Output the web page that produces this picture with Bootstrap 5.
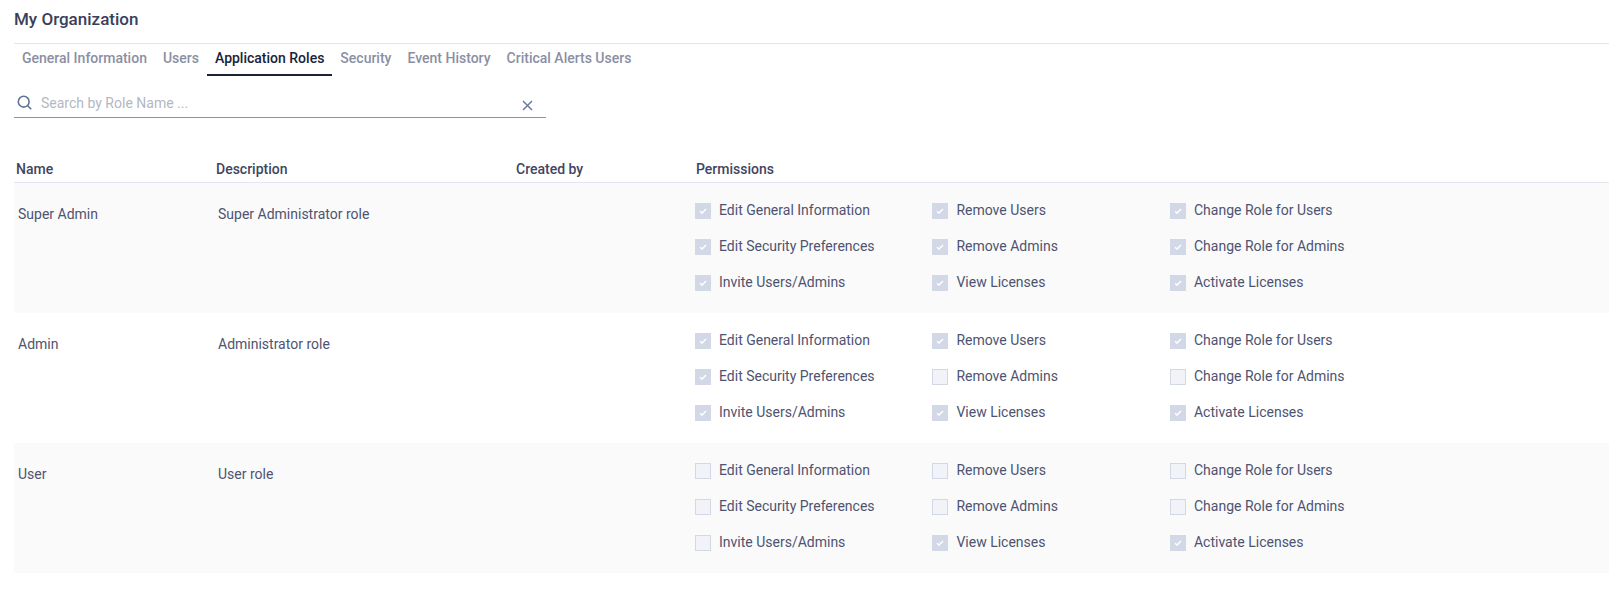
<!DOCTYPE html>
<html lang="en"><head><meta charset="utf-8"><title>My Organization</title>
<link href="https://cdn.jsdelivr.net/npm/bootstrap@5.3.0/dist/css/bootstrap.min.css" rel="stylesheet">
<style>
body{font-family:Roboto,"Liberation Sans",sans-serif;font-size:14px;color:#4e5370;background:#fff;overflow:hidden}
.page-wrap{padding:0 11px 0 14px}
.org-title{font-size:17px;font-weight:500;color:#3a405c;height:44px;line-height:39px;border-bottom:1px solid #e4e5ea;margin:0}
.tab-row{height:32px}
.tab-item{padding:0 8px;height:32px;line-height:29px;color:#8b8fa3;font-weight:500;text-decoration:none;white-space:nowrap}
.tab-item.is-on{color:#1b2238;border-bottom:2px solid #1b2238}
.search-box{width:532px;height:35px;border-bottom:1px solid #929292;margin-top:7px;padding:7px 5px 0 3px}
.search-box input{border:0;outline:0;background:transparent;font:inherit;color:#4e5370;padding:0;margin-left:1px}
.search-box input::placeholder{color:#b4b7c4}
.find-glass{margin-top:-3px}
.clear-x{margin-top:3px}
.role-head{margin-top:41px;height:24px;border-bottom:1px solid #e4e5ee;font-weight:500;color:#3f4562;line-height:20px}
.role-row{height:130px;padding-top:20px}
.role-row.shaded{background:#fafafb}
.c-name{width:195px;flex:none;padding-left:4px}
.c-desc{width:300px;flex:none;padding-left:9px}
.c-by{width:186px;flex:none}
.role-head .c-name{padding-left:2px}
.role-head .c-desc{padding-left:7px}
.role-head .c-by{width:187px;padding-left:7px}
.role-cell-text{padding-top:1px;line-height:20px}
.perm-grid{display:grid;grid-template-columns:237.4px 237.6px 1fr;grid-auto-rows:36px}
.perm-item{display:flex;gap:8px;height:36px;line-height:16px}
.tick{width:16px;height:16px;flex:none;background:#f2f3f8;border:1px solid #d3d8e6;display:flex;align-items:center;justify-content:center}
.tick.on{background:#d3d8e6}
.tick svg{display:block}
.perm-text{margin-top:-1px}
</style></head>
<body>
<div class="page-wrap">
<h1 class="org-title">My Organization</h1>
<nav class="d-flex tab-row"><a class="tab-item" href="#">General Information</a><a class="tab-item" href="#">Users</a><a class="tab-item is-on" href="#">Application Roles</a><a class="tab-item" href="#">Security</a><a class="tab-item" href="#">Event History</a><a class="tab-item" href="#">Critical Alerts Users</a></nav>
<div class="search-box d-flex align-items-center gap-2">
<svg class="find-glass" width="15" height="15" viewBox="0 0 15 15" fill="none" stroke="#5f7396" stroke-width="1.6"><circle cx="6.7" cy="6.7" r="5.4"/><path d="M10.7 10.7l3.5 3.5"/></svg>
<input class="flex-grow-1" placeholder="Search by Role Name ...">
<svg class="me-2 clear-x" width="11" height="11" viewBox="0 0 11 11" fill="none" stroke="#6a7ba0" stroke-width="1.5"><path d="M1 1l9 9M10 1l-9 9"/></svg>
</div>
<div class="role-head d-flex"><div class="c-name">Name</div><div class="c-desc">Description</div><div class="c-by">Created by</div><div>Permissions</div></div>
<div id="rows"></div>
</div>
<script>
const labels=["Edit General Information","Remove Users","Change Role for Users","Edit Security Preferences","Remove Admins","Change Role for Admins","Invite Users/Admins","View Licenses","Activate Licenses"];
const roles=[["Super Admin","Super Administrator role",[1,1,1,1,1,1,1,1,1]],["Admin","Administrator role",[1,1,1,1,0,0,1,1,1]],["User","User role",[0,0,0,0,0,0,0,1,1]]];
const chk='<svg width="8" height="6" viewBox="0 0 10 8" fill="none" stroke="#fff" stroke-width="1.9"><path d="M1 4.2l2.7 2.6L9 1.2"/></svg>';
document.getElementById('rows').innerHTML=roles.map((r,i)=>`<div class="role-row d-flex ${i%2==0?'shaded':''}"><div class="c-name role-cell-text">${r[0]}</div><div class="c-desc role-cell-text">${r[1]}</div><div class="c-by"></div><div class="perm-grid flex-grow-1">${labels.map((l,j)=>`<div class="perm-item"><span class="tick ${r[2][j]?'on':''}">${r[2][j]?chk:''}</span><span class="perm-text">${l}</span></div>`).join('')}</div></div>`).join('');
</script>
<script src="https://cdn.jsdelivr.net/npm/bootstrap@5.3.0/dist/js/bootstrap.bundle.min.js"></script>
</body></html>
